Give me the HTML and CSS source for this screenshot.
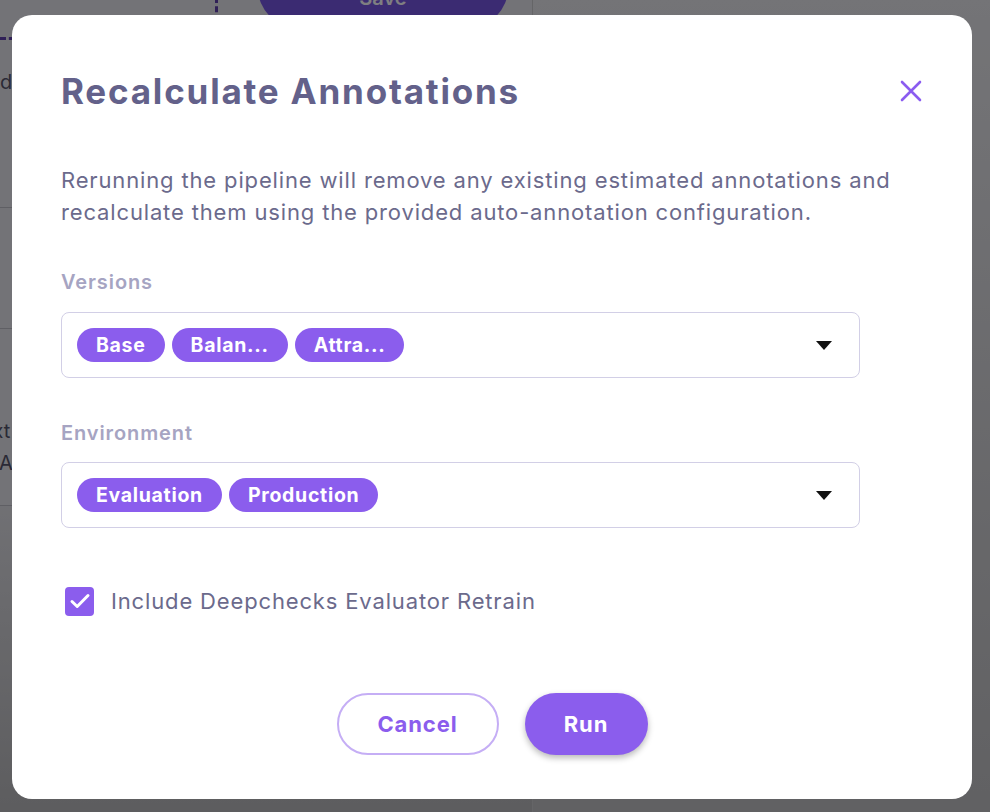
FILE: index.html
```html
<!DOCTYPE html>
<html>
<head>
<meta charset="utf-8">
<link rel="stylesheet" href="styles.css">
</head>
<body>
<div class="page">
  <div class="bg-left">
    <div class="bg-top">
      <div class="bg-dash-box"></div>
      <div class="bg-save">Save</div>
    </div>
    <div class="bg-row bg-row-a"><span class="bg-text">Mode</span></div>
    <div class="bg-row bg-row-b"></div>
    <div class="bg-row bg-row-c"><span class="bg-text">Text<br>All A</span></div>
    <div class="bg-row bg-row-d"></div>
  </div>
  <div class="bg-right"></div>
</div>

<div class="overlay">
  <div class="modal">
    <div class="modal-head">
      <h1 class="modal-title">Recalculate Annotations</h1>
      <button class="close-btn" aria-label="Close">
        <svg width="24" height="24" viewBox="0 0 24 24"><path d="M3 3 L21 21 M21 3 L3 21" stroke="#8b5cf0" stroke-width="2.6" stroke-linecap="round"/></svg>
      </button>
    </div>
    <p class="modal-desc">Rerunning the pipeline will remove any existing estimated annotations and recalculate them using the provided auto-annotation configuration.</p>

    <div class="field">
      <div class="field-label">Versions</div>
      <div class="select">
        <div class="chips">
          <span class="chip">Base</span>
          <span class="chip">Balan...</span>
          <span class="chip">Attra...</span>
        </div>
        <span class="caret"></span>
      </div>
    </div>

    <div class="field field-env">
      <div class="field-label">Environment</div>
      <div class="select">
        <div class="chips">
          <span class="chip">Evaluation</span>
          <span class="chip">Production</span>
        </div>
        <span class="caret"></span>
      </div>
    </div>

    <label class="check-row">
      <span class="checkbox">
        <svg width="24" height="24" viewBox="0 0 24 24"><path d="M4 12.5 L9.2 17.5 L20 6.5" fill="none" stroke="#fff" stroke-width="3" stroke-linecap="round" stroke-linejoin="round"/></svg>
      </span>
      <span class="check-label">Include Deepchecks Evaluator Retrain</span>
    </label>

    <div class="actions">
      <button class="btn btn-cancel">Cancel</button>
      <button class="btn btn-run">Run</button>
    </div>
  </div>
</div>
</body>
</html>
```
FILE: styles.css
```css
* { box-sizing: border-box; }
html, body { margin: 0; padding: 0; }
body {
  width: 990px;
  height: 812px;
  overflow: hidden;
  font-family: Inter, "Noto Sans", "Liberation Sans", sans-serif;
  background: #ffffff;
}
.page {
  display: flex;
  width: 990px;
  height: 812px;
}
.bg-left {
  width: 533px;
  border-right: 1px solid #c8c8c8;
  display: flex;
  flex-direction: column;
  background: #e6e6ea;
}
.bg-top {
  height: 60px;
  display: flex;
  gap: 40px;
}
.bg-dash-box {
  width: 218px;
  height: 43px;
  border-right: 3px dashed #5b3aa8;
  border-bottom: 3px dashed #5b3aa8;
  margin-top: -3px;
}
.bg-save {
  width: 250px;
  height: 56px;
  margin-top: -28px;
  border-radius: 0 0 40px 40px;
  background: #7250e0;
  color: #fff;
  font-size: 20px;
  font-weight: 600;
  display: flex;
  align-items: flex-end;
  justify-content: center;
  padding-bottom: 18px;
}
.bg-row {
  border-top: 1px solid #bcbcc2;
  font-size: 20px;
  color: #4e4e63;
}
.bg-text { display: block; }
.bg-row-a { height: 147px; padding-top: 10px; margin-left: -30px; border-top: none; }
.bg-row-b { height: 121px; }
.bg-row-c { height: 177px; padding-top: 86px; line-height: 32px; margin-left: -30px; }
.bg-row-d { flex: 1; background: linear-gradient(#e0e0e3, #b8b8b8); }
.bg-right {
  flex: 1;
  background: linear-gradient(#e8e8ea, #c0c0c0);
}

.overlay {
  position: fixed;
  inset: 0;
  background: rgba(10, 10, 14, 0.52);
  padding: 15px 18px 13px 12px;
  display: flex;
}
.modal {
  flex: 1;
  background: #ffffff;
  border-radius: 20px;
  padding: 56px 49px 44px 49px;
  display: flex;
  flex-direction: column;
}
.modal-head {
  display: flex;
  align-items: center;
  justify-content: space-between;
}
.modal-title {
  margin: 0;
  font-size: 35px;
  line-height: 40px;
  font-weight: 700;
  color: #63618a;
  letter-spacing: 1.8px;
}
.close-btn {
  border: none;
  background: none;
  padding: 0;
  width: 24px;
  height: 24px;
  margin-right: 0;
  display: flex;
}
.modal-desc {
  margin: 53px 0 0 0;
  font-size: 22px;
  line-height: 32px;
  color: #6b6a8c;
  letter-spacing: 0.85px;
  max-width: 860px;
}
.field { margin-top: 40px; }
.field-env { margin-top: 41px; }
.field-label {
  font-size: 20px;
  line-height: 28px;
  font-weight: 600;
  color: #a6a4c2;
  letter-spacing: 0.9px;
}
.select {
  margin-top: 16px;
  width: 799px;
  height: 66px;
  border: 1px solid #d2cfe6;
  border-radius: 8px;
  display: flex;
  align-items: center;
  justify-content: space-between;
  padding: 0 27px 0 15px;
}
.field-env .select { margin-top: 15px; }
.chips { display: flex; gap: 7px; }
.chip {
  height: 34px;
  padding: 0 19px;
  border-radius: 17px;
  background: #8b5ded;
  color: #ffffff;
  font-size: 19.5px;
  font-weight: 700;
  letter-spacing: 0.7px;
  display: flex;
  align-items: center;
}
.caret {
  width: 0;
  height: 0;
  border-left: 8px solid transparent;
  border-right: 8px solid transparent;
  border-top: 9px solid #111111;
}
.check-row {
  margin-top: 58px;
  display: flex;
  align-items: center;
  gap: 17px;
  padding-left: 4px;
}
.checkbox {
  width: 29px;
  height: 29px;
  border-radius: 4px;
  background: #8b5ded;
  display: flex;
  align-items: center;
  justify-content: center;
}
.check-label {
  font-size: 22px;
  line-height: 30px;
  color: #6b6a8c;
  letter-spacing: 0.85px;
}
.actions {
  margin-top: auto;
  display: flex;
  justify-content: center;
  gap: 26px;
}
.btn {
  height: 62px;
  border-radius: 31px;
  font-family: inherit;
  font-size: 22px;
  font-weight: 700;
  letter-spacing: 0.9px;
  cursor: pointer;
}
.btn-cancel {
  width: 162px;
  background: #ffffff;
  border: 2.5px solid #c5aef5;
  color: #8b5ded;
}
.btn-run {
  width: 123px;
  background: #8b5ded;
  border: none;
  color: #ffffff;
  box-shadow: 0 3px 6px rgba(0, 0, 0, 0.28);
}
```
